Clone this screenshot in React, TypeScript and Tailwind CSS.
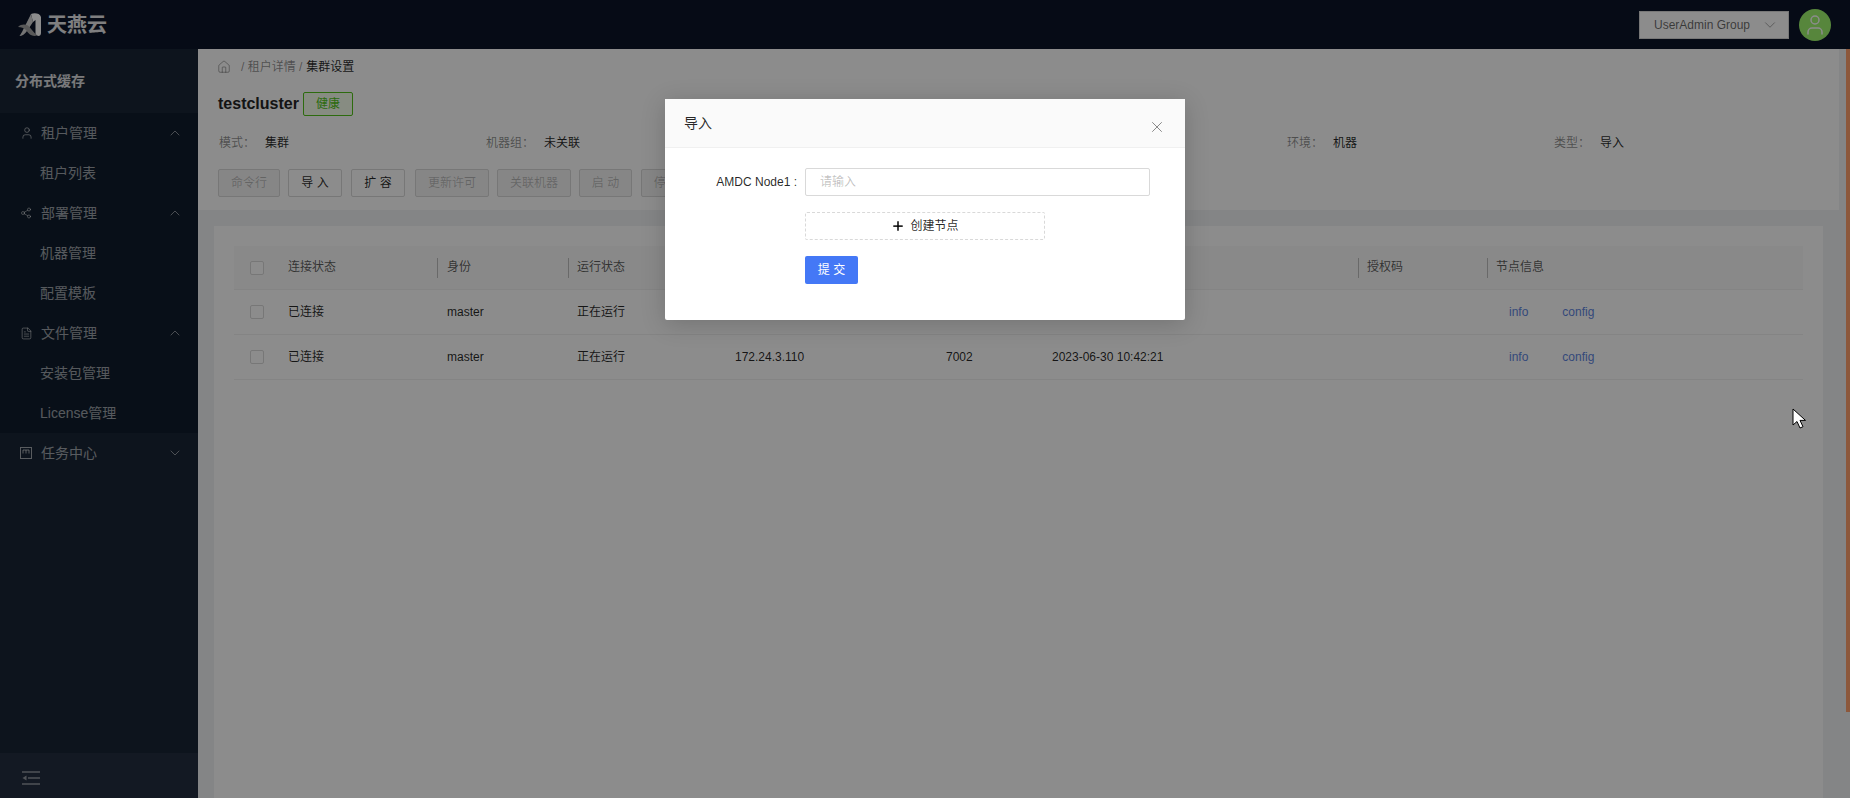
import React from "react";
import { ChevronDown, ChevronUp, FileText, Home, Plus, Share2, User, X } from "lucide-react";

const cols = "grid grid-cols-[44px_160px_131px_156px_210px_106px_318px_129px_315px]";

const rows = [
  { ip: "172.24.3.109", port: "7001", time: "2023-06-30 10:42:20" },
  { ip: "172.24.3.110", port: "7002", time: "2023-06-30 10:42:21" },
];

const heads = [
  { label: "连接状态", cls: "pl-[10px] border-r" },
  { label: "身份", cls: "pl-[9px] border-r" },
  { label: "运行状态", cls: "pl-[8px] border-r" },
  { label: "IP", cls: "pl-[9px] border-r" },
  { label: "端口", cls: "pl-[9px] border-r" },
  { label: "创建时间", cls: "pl-[9px] border-r" },
  { label: "授权码", cls: "pl-[8px] border-r" },
  { label: "节点信息", cls: "pl-[8px]" },
];

const actions = [
  { label: "命令行", w: "w-[62px]", off: true },
  { label: "导 入", w: "w-[54px] -ml-[1px]" },
  { label: "扩 容", w: "w-[54px]" },
  { label: "更新许可", w: "w-[74px] ml-[1px]", off: true },
  { label: "关联机器", w: "w-[74px] -ml-[1px]", off: true },
  { label: "启 动", w: "w-[53px] -ml-[1px]", off: true },
  { label: "停 止", w: "w-[53px]", off: true },
];

const info = [
  ["模式：", "集群", "w-[46px]"],
  ["机器组：", "未关联", "w-[58px]"],
  ["版本：", "6.2.7", "w-[46px]"],
  ["节点：", "2", "w-[46px]"],
  ["环境：", "机器", "w-[46px]"],
  ["类型：", "导入", "w-[46px]"],
];

const Check = () => (
  <span className="block w-[14px] h-[14px] rounded-[2px] border border-[#d9d9d9] bg-white" />
);

const Logo = () => (
  <svg width="24" height="24" viewBox="0 0 24 24" fill="none">
    <path d="M13 1C16 -0.3 22 0 23 4L23 20C23 22.5 21 23.5 19 22.5L17.5 21L17.5 7L15 9Z" fill="#fff" />
    <path d="M13 1L15 9L9 18C7 21 4 23 1.5 23C3.5 20 5 17 7 13Z" fill="#d4d4d4" />
    <path d="M0 14C3 11 7 11 10 12.5C13 15 15 19 19 22.5C15 24 11 22 8 17C6 15 3 14 0 14Z" fill="#a3a3a3" />
  </svg>
);

const TaskIcon = () => (
  <svg width="12" height="12" viewBox="0 0 12 12" fill="none" stroke="currentColor" strokeWidth="1">
    <rect x="0.5" y="0.5" width="11" height="11" />
    <path d="M3 3v3.5M6 3v3.5M9 3v3.5M3 3h6" />
  </svg>
);

const MenuHead = ({ icon, label, open = true }: { icon: React.ReactNode; label: string; open?: boolean }) => (
  <div className="h-10 flex items-center pl-5 pr-[15px] text-sm text-white/60">
    <span className="w-[21px] flex items-center">{icon}</span>
    <span className="flex-1">{label}</span>
    {open ? <ChevronUp className="w-4 h-4" strokeWidth={1.25} /> : <ChevronDown className="w-4 h-4" strokeWidth={1.25} />}
  </div>
);

const MenuItem = ({ label }: { label: string }) => (
  <div className="h-10 flex items-center pl-10 text-sm text-white/60">{label}</div>
);

export default function App() {
  return (
    <div
      className="relative h-[798px] w-[1850px] overflow-hidden bg-[#f0f2f5] text-xs text-[#000000d9]"
      style={{ fontFamily: '"Liberation Sans", "Noto Sans CJK SC", sans-serif' }}
    >
      {/* top bar */}
      <header className="h-[49px] bg-[#0b1428] flex items-center pl-[18px] pr-[19px]">
        <Logo />
        <span className="ml-[5px] text-[20px] font-bold text-white/90 leading-none">天燕云</span>
        <div className="ml-auto h-7 w-[150px] bg-white border border-[#d9d9d9] flex items-center pl-[14px] pr-[9px] text-[#00000099]">
          <span className="flex-1">UserAdmin Group</span>
          <ChevronDown className="w-[18px] h-[18px] text-[#00000073]" strokeWidth={1} />
        </div>
        <div className="ml-[10px] w-8 h-8 rounded-full bg-[#9ef56e] flex items-center justify-center">
          <User className="w-6 h-6 text-white" strokeWidth={1.5} />
        </div>
      </header>

      <div className="flex h-[749px]">
        {/* sidebar */}
        <aside className="w-[198px] shrink-0 bg-[#192636] flex flex-col">
          <div className="h-16 flex items-center pl-[15px] text-sm font-bold text-white/85">分布式缓存</div>
          <nav className="bg-[#101d2d]">
            <MenuHead icon={<User className="w-[14px] h-[14px]" strokeWidth={1.5} />} label="租户管理" />
            <MenuItem label="租户列表" />
            <MenuHead icon={<Share2 className="w-3 h-3" strokeWidth={1.5} />} label="部署管理" />
            <MenuItem label="机器管理" />
            <MenuItem label="配置模板" />
            <MenuHead icon={<FileText className="w-[13px] h-[13px]" strokeWidth={1.5} />} label="文件管理" />
            <MenuItem label="安装包管理" />
            <MenuItem label="License管理" />
          </nav>
          <MenuHead icon={<TaskIcon />} label="任务中心" open={false} />
          <div className="mt-auto h-[45px] bg-[#242f40] flex items-center pl-[22px] pt-[5px] text-white/50">
            <svg width="18" height="14" viewBox="0 0 18 14" fill="none" stroke="currentColor" strokeWidth="1.5">
              <path d="M0 1h18M0 13h18M6 7h12" />
              <path d="M4.5 4.5v5L0.5 7z" fill="currentColor" stroke="none" />
            </svg>
          </div>
        </aside>

        {/* content */}
        <main className="flex-1 min-w-0 flex flex-col relative pr-[11px]">
          <section className="bg-white h-[161px] w-[1641px] pl-5 shrink-0">
            <div className="h-[34px] flex items-center text-[#00000073] pt-[1px]">
              <Home className="w-[14px] h-[14px] -ml-[1px]" strokeWidth={1.25} />
              <span className="ml-[10px]">/ 租户详情 /</span>
              <span className="ml-1 text-[#000000d9]">集群设置</span>
            </div>
            <div className="h-6 mt-[9px] flex items-center">
              <span className="text-base font-bold text-[#262626]">testcluster</span>
              <span className="ml-1 h-6 w-[50px] rounded-[2px] border border-[#52c41a] bg-[#f6ffed] text-[#52c41a] flex items-center justify-center">健康</span>
            </div>
            <div className="flex h-5 mt-[17px] items-center">
              {info.map(([k, v, w]) => (
                <div key={k} className="w-[267px] flex items-center pl-[1px]">
                  <span className={`${w} text-[#00000073]`}>{k}</span>
                  <span>{v}</span>
                </div>
              ))}
            </div>
            <div className="flex gap-[9px] mt-4">
              {actions.map((a) => (
                <button
                  key={a.label}
                  className={`${a.w} h-7 rounded-[2px] border border-[#d9d9d9] ${a.off ? "bg-[#f5f5f5] text-[#00000040]" : "bg-white"}`}
                >
                  {a.label}
                </button>
              ))}
            </div>
          </section>

          <section className="mt-4 ml-4 mr-4 flex-1 bg-white pt-5 px-5">
            <div className={`${cols} h-[44px] bg-[#fafafa] border-b border-[#f0f0f0] items-center text-[#000000a6]`}>
              <span className="pl-4"><Check /></span>
              {heads.map((h) => (
                <span key={h.label} className={`h-[20px] flex items-center pb-[2px] border-[#bfbfbf] ${h.cls}`}>
                  {h.label}
                </span>
              ))}
            </div>
            {rows.map((r) => (
              <div key={r.ip} className={`${cols} h-[45px] border-b border-[#f0f0f0] items-center`}>
                <span className="pl-4"><Check /></span>
                <span className="pl-[10px]">已连接</span>
                <span className="pl-[9px]">master</span>
                <span className="pl-[8px]">正在运行</span>
                <span className="pl-[10px]">{r.ip}</span>
                <span className="pl-[11px]">{r.port}</span>
                <span className="pl-[11px]">{r.time}</span>
                <span />
                <span className="pl-[21px] flex gap-[34px] text-[#5f86e0]">
                  <span>info</span>
                  <span>config</span>
                </span>
              </div>
            ))}
          </section>
        </main>
      </div>

      {/* scrollbar thumb */}
      <div className="absolute right-0 top-[49px] h-[663px] w-1 bg-[#ffa06e]" />

      {/* modal mask */}
      <div className="absolute inset-0 bg-black/45">
        <div className="absolute left-[665px] top-[99px] w-[520px] h-[221px] rounded-[2px] bg-white shadow-[0_4px_24px_rgba(0,0,0,0.18)]">
          <div className="h-[49px] bg-[#fafafa] border-b border-[#f0f0f0] pl-[19px] flex items-center relative">
            <span className="text-sm">导入</span>
            <X className="absolute right-[19px] top-[19px] w-[18px] h-[18px] text-[#00000099]" strokeWidth={1} />
          </div>
          <div className="pt-5">
            <div className="flex items-center h-[28px]">
              <span className="w-[132px] text-right">AMDC Node1 :</span>
              <div className="ml-2 w-[345px] h-[28px] rounded-[2px] border border-[#d9d9d9] pl-[14px] flex items-center text-[#00000040]">请输入</div>
            </div>
            <div className="ml-[140px] mt-[16px] w-[240px] h-[28px] rounded-[2px] border border-dashed border-[#d9d9d9] flex items-center justify-center">
              <Plus className="w-[14px] h-[14px] mr-[5px]" strokeWidth={3} />
              创建节点
            </div>
            <button className="block ml-[140px] mt-4 w-[53px] h-[28px] rounded-[2px] bg-[#4478f6] text-white">提 交</button>
          </div>
        </div>
      </div>

      {/* mouse pointer from the screenshot */}
      <svg className="absolute left-[1792px] top-[408px]" width="14" height="22" viewBox="0 0 14 22">
        <path d="M1 1v16l4-3.5 3 6.5 3-1.3-3-6.3h5.5z" fill="#fff" stroke="#000" strokeWidth="1" />
      </svg>
    </div>
  );
}
